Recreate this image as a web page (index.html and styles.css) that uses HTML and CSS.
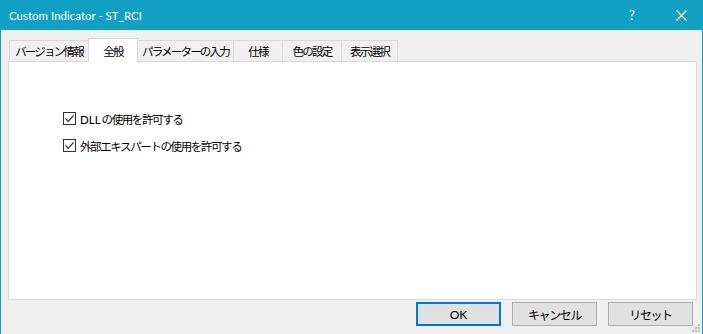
FILE: index.html
```html
<!DOCTYPE html>
<html lang="ja">
<head>
  <meta charset="UTF-8" />
  <title>Custom Indicator - ST_RCI</title>
  <link rel="stylesheet" href="styles.css">
</head>
<body>
  <div class="window">
    <div class="titlebar">
      <span class="title">Custom Indicator - ST_RCI</span>
      <span class="help">?</span>
      <span class="close">
        <svg width="11" height="11" viewBox="0 0 11 11"><path d="M0.5 0.5 L10.5 10.5 M10.5 0.5 L0.5 10.5" stroke="#fff" stroke-width="1.1" fill="none"/></svg>
      </span>
    </div>

    <div class="tabs">
      <div class="tab w1">バージョン情報</div>
      <div class="tab w2 active">全般</div>
      <div class="tab w3">パラメーターの入力</div>
      <div class="tab w4">仕様</div>
      <div class="tab w5">色の設定</div>
      <div class="tab w6">表示選択</div>
    </div>

    <div class="panel">
      <label class="check-row">
        <span class="checkbox">
          <svg width="11" height="11" viewBox="0 0 11 11"><polyline points="1.5,5.5 4.2,8.3 9.6,2.3" stroke="#333" stroke-width="1.2" fill="none"/></svg>
        </span>
        <span class="ja"><span class="latin">DLL</span>の使用を許可する</span>
      </label>
      <label class="check-row">
        <span class="checkbox">
          <svg width="11" height="11" viewBox="0 0 11 11"><polyline points="1.5,5.5 4.2,8.3 9.6,2.3" stroke="#333" stroke-width="1.2" fill="none"/></svg>
        </span>
        <span class="ja">外部エキスパートの使用を許可する</span>
      </label>
    </div>

    <div class="buttons">
      <button class="btn default">OK</button>
      <button class="btn ja">キャンセル</button>
      <button class="btn ja">リセット</button>
    </div>

    <svg class="grip" width="10" height="10" viewBox="0 0 10 10">
      <rect x="7" y="1" width="2" height="2" fill="#b8b8b8"/>
      <rect x="4" y="4" width="2" height="2" fill="#b8b8b8"/>
      <rect x="7" y="4" width="2" height="2" fill="#b8b8b8"/>
      <rect x="1" y="7" width="2" height="2" fill="#b8b8b8"/>
      <rect x="4" y="7" width="2" height="2" fill="#b8b8b8"/>
      <rect x="7" y="7" width="2" height="2" fill="#b8b8b8"/>
    </svg>
  </div>
</body>
</html>
```

FILE: styles.css
```css
body {
  margin: 0;
  padding: 0;
  font-family: "Lato", "Noto Sans CJK JP", sans-serif;
  font-size: 12px;
  color: #000;
  background: #f0f0f0;
}

.window {
  position: relative;
  width: 703px;
  height: 334px;
  box-sizing: border-box;
  border-left: 1px solid #119fc3;
  border-right: 1px solid #119fc3;
  background: #f0f0f0;
  overflow: hidden;
}

.titlebar {
  height: 30px;
  background: #119fc3;
  color: #fff;
  display: flex;
  align-items: center;
  padding-left: 8px;
}

.title {
  flex: 1;
  font-family: "Lato", sans-serif;
  font-size: 11.5px;
}

.help {
  width: 12px;
  font-size: 13px;
  margin-right: 35px;
}

.close {
  display: flex;
  margin-right: 15px;
}

.tabs {
  display: flex;
  align-items: flex-end;
  margin: 8px 0 0 8px;
  height: 23px;
  position: relative;
  z-index: 2;
}

.tab {
  height: 21px;
  box-sizing: border-box;
  border: 1px solid #d9d9d9;
  border-bottom: none;
  border-left: none;
  background: #f0f0f0;
  display: flex;
  align-items: center;
  justify-content: center;
  white-space: nowrap;
  font-family: "Noto Sans CJK JP", sans-serif;
  font-size: 11.5px;
  letter-spacing: -1.8px;
  color: #000;
}

.tab:first-child {
  border-left: 1px solid #d9d9d9;
}

.tab.active {
  height: 24px;
  background: #fff;
  border-left: 1px solid #d9d9d9;
  margin-bottom: -1px;
}

.w1 { width: 80px; }
.w2 { width: 50px; margin-left: -1px; }
.w3 { width: 96px; }
.w4 { width: 49px; }
.w5 { width: 59px; }
.w6 { width: 56px; }

.panel {
  margin: 0 5px 0 7px;
  height: 239px;
  box-sizing: border-box;
  background: #fff;
  border: 1px solid #d9d9d9;
  padding: 50px 0 0 54px;
  display: flex;
  flex-direction: column;
  gap: 14px;
}

.check-row {
  display: flex;
  align-items: center;
  gap: 4px;
  height: 13px;
  white-space: nowrap;
}

.ja {
  font-family: "Lato", "Noto Sans CJK JP", sans-serif;
  font-size: 11.5px;
  letter-spacing: -1.4px;
}

.latin {
  letter-spacing: 0;
  margin-right: 1px;
}

.checkbox {
  width: 13px;
  height: 13px;
  box-sizing: border-box;
  border: 1px solid #333;
  background: #fff;
  display: flex;
  align-items: center;
  justify-content: center;
}

.buttons {
  display: flex;
  justify-content: flex-end;
  gap: 11px;
  margin: 2px 9px 0 0;
}

.btn {
  width: 85px;
  height: 24px;
  box-sizing: border-box;
  background: #e1e1e1;
  border: 1px solid #adadad;
  font-family: "Lato", "Noto Sans CJK JP", sans-serif;
  font-size: 12px;
  color: #000;
  padding: 0;
}

.btn.default {
  border: 2px solid #0078d7;
}

.grip {
  position: absolute;
  right: 1px;
  bottom: 1px;
}
```
